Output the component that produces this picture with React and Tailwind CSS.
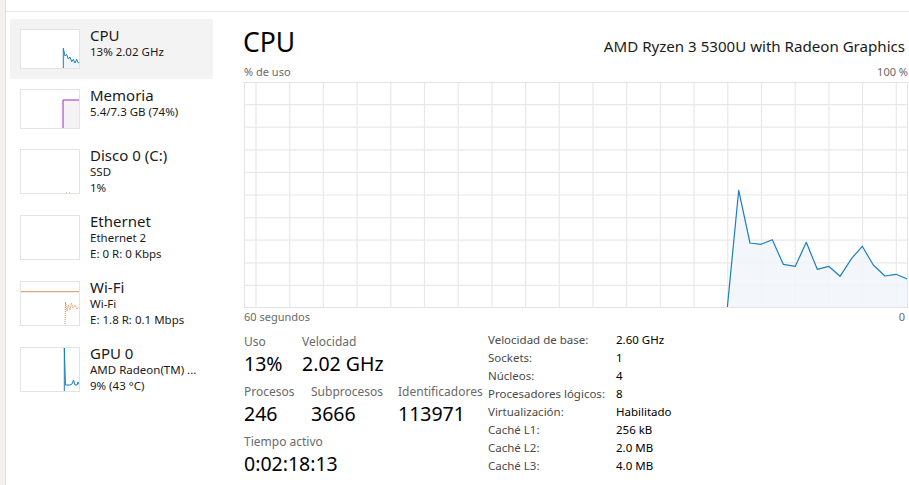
import React from 'react'

const font = "font-['Noto_Sans',sans-serif]"

// sidebar entries, thumbnail is drawn per kind
const devices = [
    { kind: 'cpu', title: 'CPU', lines: ['13% 2.02 GHz'], selected: true },
    { kind: 'mem', title: 'Memoria', lines: ['5.4/7.3 GB (74%)'] },
    { kind: 'disk', title: 'Disco 0 (C:)', lines: ['SSD', '1%'] },
    { kind: 'eth', title: 'Ethernet', lines: ['Ethernet 2', 'E: 0 R: 0 Kbps'] },
    { kind: 'wifi', title: 'Wi-Fi', lines: ['Wi-Fi', 'E: 1.8 R: 0.1 Mbps'] },
    { kind: 'gpu', title: 'GPU 0', lines: ['AMD Radeon(TM) ...', '9% (43 °C)'] },
]

const cpuPoints = [
    [483.3, 225.7], [494.7, 108.3], [506, 161], [517, 162.3], [528.3, 157.7],
    [539.3, 182.3], [551.3, 184.3], [562.3, 160.3], [573.3, 187.3], [584.7, 184.3],
    [596, 194.3], [607.7, 176.3], [618.3, 164.3], [629.3, 183], [641, 194],
    [652, 192.3], [663.3, 197],
]

const specs = [
    ['Velocidad de base:', '2.60 GHz'],
    ['Sockets:', '1'],
    ['Núcleos:', '4'],
    ['Procesadores lógicos:', '8'],
    ['Virtualización:', 'Habilitado'],
    ['Caché L1:', '256 kB'],
    ['Caché L2:', '2.0 MB'],
    ['Caché L3:', '4.0 MB'],
]

const Thumb = ({ kind, h }) => {
    let content = null
    if (kind === 'cpu') {
        const pts = '43.3,39 43.3,19.3 45,27 46.7,25.3 48.3,30 50,28 51.7,32.7 53.3,30.3 55,34 56.7,30.3 58.3,34 59.5,33'
        content = (
            <>
                <polygon points={`${pts} 59.5,39`} fill="#f1f6fa" />
                <polyline points={pts} fill="none" stroke="#1b7fc0" strokeWidth="1" />
            </>
        )
    } else if (kind === 'mem') {
        content = (
            <>
                <rect x="43" y="11" width="17" height="29" fill="#f4f2f5" />
                <polyline points="43,40 43,11 60,11" fill="none" stroke="#9b2cbd" strokeWidth="1" />
            </>
        )
    } else if (kind === 'disk') {
        content = (
            <>
                <rect x="46" y="43.5" width="1" height="1" fill="#6fb33a" />
                <rect x="49" y="43.5" width="1" height="1" fill="#6fb33a" />
            </>
        )
    } else if (kind === 'wifi') {
        content = (
            <>
                <rect x="0" y="10" width="60" height="1.2" fill="#dba272" />
                <polyline points="45,45 45.5,21 47,30 48.5,24 50,29 51.5,22 53,27 55,24 57,28 59,26"
                    fill="none" stroke="#e5834a" strokeWidth="1" strokeDasharray="1 1" />
                <line x1="45" y1="44.5" x2="60" y2="44.5" stroke="#e5834a" strokeWidth="1" strokeDasharray="1 3" />
            </>
        )
    } else if (kind === 'gpu') {
        content = (
            <polyline points="44.3,45 44.3,0.5 45.5,38 50,38 52,37 53.5,33 55,38 57,38 58,35 59.5,38"
                fill="none" stroke="#1b7fc0" strokeWidth="1" />
        )
    }
    return (
        <div className="w-[60px] shrink-0 border border-[#e3e3e3] bg-white overflow-hidden" style={{ height: h }}>
            <svg width="58" height={h - 2} viewBox={`1 1 58 ${h - 2}`} className="block">
                {content}
            </svg>
        </div>
    )
}

const DeviceItem = ({ device }) => {
    const tall = device.lines.length > 1
    return (
        <div className={`flex gap-[10px] px-[10px] pt-[10px] w-[203px] ${tall ? 'h-[66px]' : 'h-[60px]'} ${device.selected ? 'bg-[#f3f3f3]' : ''}`}>
            <Thumb kind={device.kind} h={tall ? 45 : 40} />
            <div className="-mt-[3px] min-w-0">
                <div className="text-[15px] leading-[18px] text-[#1a1a1a] whitespace-nowrap">{device.title}</div>
                {device.lines.map((l) => (
                    <div key={l} className="text-[11.5px] leading-[16px] text-[#1a1a1a] whitespace-nowrap">{l}</div>
                ))}
            </div>
        </div>
    )
}

const CpuGraph = () => {
    const w = 664
    const h = 226
    const vLines = []
    for (let k = 0; k < 20; k++) vLines.push(12 + k * 33.7)
    const hLines = []
    for (let k = 1; k < 10; k++) hLines.push(k * 22.6)
    const line = cpuPoints.map(p => p.join(',')).join(' ')
    return (
        <div className="w-[664px] h-[226px] border border-[#e3e3e3] bg-white">
            <svg width={w - 2} height={h - 2} viewBox={`1 1 ${w - 2} ${h - 2}`} className="block">
                {vLines.map(x => (
                    <line key={x} x1={x} y1="0" x2={x} y2={h} stroke="#e8e8e8" strokeWidth="1.2" />
                ))}
                {hLines.map(y => (
                    <line key={y} x1="0" y1={y} x2={w} y2={y} stroke="#e8e8e8" strokeWidth="1.2" />
                ))}
                <polygon points={`${line} 664,226`} fill="#f1f6fa" fillOpacity="0.85" />
                <polyline points={line} fill="none" stroke="#1b7fc0" strokeWidth="1.2" strokeLinejoin="round" />
            </svg>
        </div>
    )
}

const Stat = ({ label, value, className = '' }) => (
    <div className={className}>
        <div className="text-[12px] leading-[16px] text-[#6a6a6a] whitespace-nowrap">{label}</div>
        <div className="text-[19.5px] leading-[26px] text-black whitespace-nowrap mt-[1px]">{value}</div>
    </div>
)

export default function App() {
    return (
        <div className={`w-[909px] h-[485px] flex bg-white overflow-hidden ${font}`}>
            {/* window edge */}
            <div className="w-[6px] shrink-0 bg-[#f3f2ee] border-r border-[#e2e0da]" />

            <div className="flex-1 flex flex-col min-w-0">
                <div className="h-[12px] shrink-0 border-b border-[#e8e8e8]" />

                <div className="flex flex-1 min-h-0">
                    {/* device list */}
                    <div className="w-[237px] shrink-0 pl-[4px] pt-[7px]">
                        {devices.map(d => <DeviceItem key={d.title} device={d} />)}
                    </div>

                    {/* cpu details */}
                    <div className="flex-1 min-w-0 pt-[13px]">
                        <div className="flex items-baseline justify-between pr-[4px]">
                            <div className="text-[26.5px] leading-[34px] text-black">CPU</div>
                            <div className="text-[15.1px] text-[#1a1a1a]">AMD Ryzen 3 5300U with Radeon Graphics</div>
                        </div>
                        <div className="flex justify-between text-[11px] leading-[14px] text-[#6a6a6a] mt-[6px] pl-[1px] pr-[1px]">
                            <span>% de uso</span>
                            <span>100 %</span>
                        </div>
                        <div className="mt-[3px] ml-[1px]">
                            <CpuGraph />
                        </div>
                        <div className="flex justify-between text-[11px] leading-[14px] text-[#6a6a6a] mt-[2px] pl-[1px] pr-[4px]">
                            <span>60 segundos</span>
                            <span>0</span>
                        </div>

                        <div className="flex mt-[10px] pl-[1px]">
                            <div className="w-[244px] shrink-0 flex flex-col gap-[7px]">
                                <div className="flex gap-[15px]">
                                    <Stat label="Uso" value="13%" className="w-[43px]" />
                                    <Stat label="Velocidad" value="2.02 GHz" />
                                </div>
                                <div className="flex">
                                    <Stat label="Procesos" value="246" className="w-[67px]" />
                                    <Stat label="Subprocesos" value="3666" className="w-[87px]" />
                                    <Stat label="Identificadores" value="113971" />
                                </div>
                                <Stat label="Tiempo activo" value="0:02:18:13" />
                            </div>
                            <div className="-mt-[3px]">
                                {specs.map(([k, v]) => (
                                    <div key={k} className="flex text-[11.5px] leading-[18px]">
                                        <span className="w-[128px] shrink-0 text-[#4a4a4a]">{k}</span>
                                        <span className="text-black">{v}</span>
                                    </div>
                                ))}
                            </div>
                        </div>
                    </div>
                </div>
            </div>
        </div>
    )
}
